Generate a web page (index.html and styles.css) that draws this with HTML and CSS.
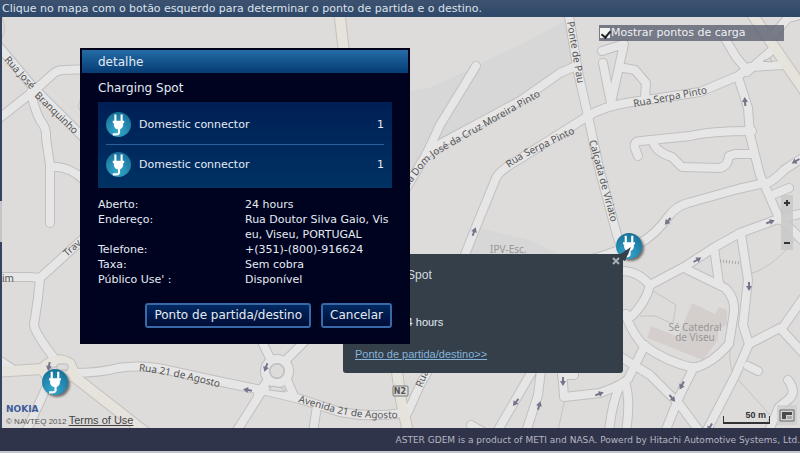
FILE: index.html
```html
<!DOCTYPE html>
<html lang="pt">
<head>
<meta charset="utf-8">
<title>Charging Spot</title>
<link rel="stylesheet" href="styles.css">
</head>
<body>
<header class="hint">Clique no mapa com o botão esquerdo para determinar o ponto de partida e o destino.</header>
<main class="stage">
  <div class="rail"><span class="rail-handle"></span></div>
  <section class="map">
    <svg class="map-canvas" viewBox="2 17 798 411" preserveAspectRatio="xMinYMin slice" aria-hidden="true">
      <defs>
        <g id="roads">
          <path d="M-4 43L33 87L86 140"/>
          <path d="M-4 121L35 90L53 74Q57 70 64 70L90 69"/>
          <path d="M31 92Q34 108 40 120Q47 128 46 138L50 165L50 223"/>
          <path d="M50 167Q68 165 84 180"/>
          <path d="M84 238L40 278L30 277L-4 277"/>
          <path d="M40 278L38 298L34 325Q35 333 54 358"/>
          <path d="M72 373Q100 373 118 368Q145 364 172 371Q230 384 262 390L300 399L340 412Q370 418 402 413"/>
          <path d="M48 384L26 432"/>
          <path d="M-4 358L14 370"/>
          <path d="M262 391L236 432"/>
          <path d="M260 338L270 358M306 340L286 360M268 380L258 394M287 380L294 396"/>
          <circle cx="277" cy="371" r="12"/>
          <path d="M317 406L313 432"/>
          <path d="M433 362L420 385L408 412"/>
          <path d="M476 66L440 125L427 153L404 192"/>
          <path d="M426 154L440 144L520 101L560 73L576 66"/>
          <path d="M462 262L478 222L496 178Q500 170 518 160L588 116Q604 106 632 102L700 92L738 76L750 67L784 65"/>
          <path d="M568 10L578 72L588 116L600 172L617 235L622 250"/>
          <path d="M602 51L624 44L611 103M603 63L611 103M624 68L635 70L646 83L645 97"/>
          <path d="M720 30L736 57L747 70M747 72L772 50M772 36L788 18L804 14"/>
          <path d="M738 77L748 108L750 135L760 175L780 220"/>
          <path d="M638 156L635 148Q633 141 641 141L690 136Q710 131 752 131"/>
          <path d="M653 142Q656 152 672 157L682 167L720 168Q728 166 729 156L735 154L754 154"/>
          <path d="M765 183L738 189L688 203Q676 206 668 217Q655 235 640 243L590 260"/>
          <path d="M765 184Q774 181 784 170L804 157M772 195L789 188"/>
          <path d="M804 213L778 219L740 233L715 247L684 267L650 285M780 218L804 242"/>
          <path d="M620 271Q637 270 650 285Q646 302 632 316L622 316"/>
          <path d="M714 248L719 283"/>
          <path d="M684 268L725 288Q735 297 734 312L729 344Q712 364 694 368Q666 362 642 344Q628 326 626 314"/>
          <path d="M741 234L748 280L743 325L749 344L735 376L707 430"/>
          <path d="M749 344L780 328L804 354M783 327L804 297M748 366L758 371"/>
          <path d="M645 345L628 379Q622 385 600 393L564 397L562 370"/>
          <path d="M616 354L650 375L680 405L700 432"/>
          <path d="M694 367L680 395L665 432"/>
          <path d="M620 386Q612 402 609 432M625 382Q631 400 626 432"/>
          <path d="M534 368L498 430M541 370L538 395L526 432M574 366L574 375L562 375"/>
          <path d="M788 380Q797 392 789 399L779 407L770 428M471 425L487 434"/>
        </g>
        <g id="avenues">
          <path d="M339 10L344 52M396 365L401 400L408 432"/>
          <path d="M-4 372L42 369Q56 355 70 364L76 378L145 432M42 369L48 377L74 376"/>
          <path d="M748 8L775 48L808 96"/>
        </g>
        <radialGradient id="pinFill" cx=".45" cy=".8" r=".8">
          <stop offset="0" stop-color="#36a7cc"/><stop offset="1" stop-color="#177098"/>
        </radialGradient>
        <symbol id="plug" viewBox="0 0 24 24">
          <circle cx="12" cy="12" r="12" fill="url(#pinFill)"/>
          <path d="M9 2.500V9M15 2.500V9" stroke="#fff" stroke-width="2" fill="none"/>
          <path d="M6.500 8.500H17.500V10.500H16.500V13Q16 16 13.500 16.500H10.500Q8 16 7.500 13V10.500H6.500Z" fill="#fff"/>
          <path d="M12.500 16V20Q12 21.500 10 21.500H6.500" stroke="#fff" stroke-width="2" fill="none"/>
        </symbol>
        <path id="arrow" d="M-4 -1H0V-3L5 0L0 3V1H-4Z"/>
        <path id="l-branq1" d="M4 60L40 100"/>
        <path id="l-branq2" d="M34 96L84 144"/>
        <path id="l-agosto" d="M139 371Q172 374 236 392"/>
        <path id="l-avenida" d="M298 402L336 413Q370 421 410 417"/>
        <path id="l-dom" d="M404 193L424 166Q430 159 438 154L560 85"/>
        <path id="l-serpa1" d="M509 168Q518 161 530 155L600 121"/>
        <path id="l-serpa2" d="M634 107L725 90"/>
        <path id="l-ponte" d="M567 22L582 110"/>
        <path id="l-calcada" d="M589 141L617 244"/>
      </defs>
      <rect width="810" height="440" class="land"/>
      <path d="M410 91L432 87L530 40L568 19L577 65L530 94L431 147L410 182Z" class="district"/>
      <path d="M480 228L530 240L560 255H462Z" class="district"/>
      <path d="M692 303L715 314L719 307L727 310L727 325L718 329L718 340L703 360L647 338L651 326L686 340L680 332Z" class="building"/>
      <path d="M650 289L676 305L673 324L655 316H640M749 274Q775 268 804 228M732 340Q727 356 733 374L770 415M565 399L558 430M80 100Q77 106 80 111M2 17Q7 30 2 38" class="footpath"/>
      <use href="#roads" class="casing"/>
      <use href="#avenues" class="avenue-casing"/>
      <use href="#roads" class="surface"/>
      <use href="#avenues" class="avenue-surface"/>
      <circle cx="277" cy="371" r="7" class="island"/>
      <path d="M269 390L272 386L282 388L285 392ZM763 61L770 58L772 62Z" class="island"/>
      <rect x="57" y="364" width="11" height="6" rx="2" class="island"/>
      <path d="M720 261L741 263" class="steps"/>
      <g class="arrows">
        <use href="#arrow" transform="translate(248 390) rotate(190)"/>
        <use href="#arrow" transform="translate(49 366) rotate(100)"/>
        <use href="#arrow" transform="translate(266 367) rotate(110)"/>
        <use href="#arrow" transform="translate(474 232) rotate(-70)"/>
        <use href="#arrow" transform="translate(516 402) rotate(128)"/>
        <use href="#arrow" transform="translate(539 406) rotate(-75)"/>
        <use href="#arrow" transform="translate(563 381) rotate(90)"/>
        <use href="#arrow" transform="translate(599 394) rotate(-20)"/>
        <use href="#arrow" transform="translate(672 398) rotate(50)"/>
        <use href="#arrow" transform="translate(682 385) rotate(118)"/>
        <use href="#arrow" transform="translate(697 260) rotate(-30)"/>
        <use href="#arrow" transform="translate(749 286) rotate(90)"/>
        <use href="#arrow" transform="translate(770 222) rotate(-20)"/>
        <use href="#arrow" transform="translate(668 221) rotate(130)"/>
        <use href="#arrow" transform="translate(745 102) rotate(-95)"/>
        <use href="#arrow" transform="translate(796 161) rotate(150)"/>
        <use href="#arrow" transform="translate(710 427) rotate(120)"/>
      </g>
      <g class="street">
        <text><textPath href="#l-branq1">Rua José</textPath></text>
        <text><textPath href="#l-branq2">Branquinho</textPath></text>
        <text><textPath href="#l-agosto">Rua 21 de Agosto</textPath></text>
        <text><textPath href="#l-avenida">Avenida 21 de Agosto</textPath></text>
        <text><textPath href="#l-dom">Rua Dom José da Cruz Moreira Pinto</textPath></text>
        <text><textPath href="#l-serpa1">Rua Serpa Pinto</textPath></text>
        <text><textPath href="#l-serpa2">Rua Serpa Pinto</textPath></text>
        <text><textPath href="#l-ponte">Ponte de Pau</textPath></text>
        <text><textPath href="#l-calcada">Calçada de Viriato</textPath></text>
        <text transform="translate(67 257) rotate(-42)">Trav</text>
        <text x="2" y="282">im</text>
        <text transform="translate(422 388) rotate(-68)">Rua</text>
      </g>
      <g class="place">
        <text x="490" y="253">IPV-Esc.</text>
        <text x="695" y="331" text-anchor="middle">Sé Catedral</text>
        <text x="695" y="341" text-anchor="middle">de Viseu</text>
      </g>
      <rect x="393" y="386" width="15" height="10" rx="1" class="shield"/>
      <text x="400" y="394" text-anchor="middle" class="shield-text">N2</text>
      <g class="pin">
        <use href="#plug" x="42" y="369" width="26" height="26"/>
        <use href="#plug" x="616" y="233" width="26" height="26"/>
      </g>
    </svg>

    <label class="toggle" for="spots"><input id="spots" type="checkbox" checked>Mostrar pontos de carga</label>

    <div class="zoom">
      <button type="button" aria-label="Zoom in"><svg viewBox="0 0 8 8"><path d="M4 1V7M1 4H7"/></svg></button>
      <button type="button" aria-label="Zoom out"><svg viewBox="0 0 8 8"><path d="M1 4H7"/></svg></button>
    </div>

    <div class="credits">
      <strong class="brand">NOKIA</strong>
      <div class="legal">© NAVTEQ 2012 <a href="#terms">Terms of Use</a></div>
    </div>

    <div class="map-tools">
      <div class="scale">50 m</div>
      <button class="overview" type="button" aria-label="Overview"><svg viewBox="0 0 16 13"><path d="M1 1H15V12H1Z" fill="#d5d5d4" stroke="#666" stroke-width="1"/><path d="M3 3H13V6H7V10H3Z" fill="#4b4b4b"/><path d="M8 7H13V10H8Z" fill="#aaa"/></svg></button>
    </div>

    <aside class="bubble">
      <svg class="bubble-tip" viewBox="0 0 16 14" aria-hidden="true"><path d="M0 10L15 0L9 14Z"/></svg>
      <button class="bubble-close" type="button" aria-label="Close"><svg viewBox="0 0 8 8"><path d="M1 1L7 7M7 1L1 7"/></svg></button>
      <h2>Charging Spot</h2>
      <p class="bubble-hours"><span>Aberto:</span><span>24 hours</span></p>
      <a href="#route">Ponto de partida/destino&gt;&gt;</a>
    </aside>

    <section class="dialog" role="dialog" aria-labelledby="dialog-title">
      <h1 id="dialog-title">detalhe</h1>
      <div class="dialog-body">
        <h2>Charging Spot</h2>
        <ul class="connectors">
          <li><svg><use href="#plug"/></svg><span>Domestic connector</span><b>1</b></li>
          <li><svg><use href="#plug"/></svg><span>Domestic connector</span><b>1</b></li>
        </ul>
        <dl class="facts">
          <dt>Aberto:</dt><dd>24 hours</dd>
          <dt>Endereço:</dt><dd>Rua Doutor Silva Gaio, Vis<br>eu, Viseu, PORTUGAL</dd>
          <dt>Telefone:</dt><dd>+(351)-(800)-916624</dd>
          <dt>Taxa:</dt><dd>Sem cobra</dd>
          <dt>Público Use' :</dt><dd>Disponível</dd>
        </dl>
        <div class="actions">
          <button type="button">Ponto de partida/destino</button>
          <button type="button">Cancelar</button>
        </div>
      </div>
    </section>
  </section>
</main>
<footer class="notice">ASTER GDEM is a product of METI and NASA. Powerd by Hitachi Automotive Systems, Ltd.</footer>
</body>
</html>
```
FILE: styles.css
```css
* { box-sizing: border-box; }
body {
  margin: 0;
  height: 100vh;
  display: flex;
  flex-direction: column;
  overflow: hidden;
  font: 11px/15px "DejaVu Sans", Verdana, sans-serif;
  color: #e4ebf4;
  background: #30344a;
}
h1, h2, p, ul, dl, dd { margin: 0; padding: 0; font-weight: normal; }
button { padding: 0; border: 0; background: none; font: inherit; color: inherit; }

.hint {
  padding: 1px 2px;
  background: linear-gradient(#3c526f, #2f486a);
  color: #dde2ea;
}
.stage { flex: 1; min-height: 0; display: flex; }
.rail { width: 2px; padding-top: 184px; background: #34435f; }
.rail-handle { display: block; height: 41px; background: #c4c5c9; }
.map { flex: 1; position: relative; overflow: hidden; background: #dddcdb; }
.map-canvas { display: block; width: 100%; height: 100%; }
.notice {
  padding: 5px 0 4px;
  border-bottom: 2px solid #c5c7ce;
  background: #30344a;
  color: #b4b7c2;
  font-size: 9px;
  line-height: 14px;
  text-align: right;
  white-space: nowrap;
}

.land { fill: #dddcdb; }
.district { fill: #d7d7d7; }
.building { fill: #d4cfcd; }
.footpath { fill: none; stroke: #c6c4c1; }
.casing, .surface, .avenue-casing, .avenue-surface { fill: none; stroke-linecap: round; stroke-linejoin: round; }
.casing { stroke: #c1bfc0; stroke-width: 10px; }
.surface { stroke: #e7e6e6; stroke-width: 8px; }
.avenue-casing { stroke: #c4c1bd; stroke-width: 12px; }
.avenue-surface { stroke: #e6e3dd; stroke-width: 10px; }
.island { fill: #dddcdb; stroke: #bcbabb; }
.steps { stroke: #aaa8a6; stroke-width: 3px; stroke-dasharray: 1 2; }
.arrows { fill: #77738a; }
.street { font: 10px "Noto Sans", sans-serif; fill: #555; }
.place { font: 10px "Noto Sans", sans-serif; fill: #989696; }
.shield { fill: #dedddc; stroke: #777; }
.shield-text { font-size: 8px; font-weight: bold; fill: #555; }
.pin { filter: drop-shadow(2px 2px 1px rgba(0, 0, 0, .5)); }

.toggle {
  position: absolute;
  top: 8px;
  right: 16px;
  width: 185px;
  display: flex;
  align-items: center;
  background: rgba(88, 93, 110, .78);
  color: #eef0f4;
  line-height: 16px;
}
.toggle input {
  appearance: none;
  width: 10px;
  height: 10px;
  margin: 0 1px;
  background: #f2f2f2;
  position: relative;
}
.toggle input:checked::after {
  content: "";
  position: absolute;
  left: 3px;
  top: 1px;
  width: 4px;
  height: 7px;
  border: solid #222;
  border-width: 0 2px 2px 0;
  transform: rotate(40deg);
}

.zoom {
  position: absolute;
  top: 178px;
  right: 7px;
  width: 12px;
  height: 55px;
  padding: 3px 2px;
  display: flex;
  flex-direction: column;
  justify-content: space-between;
  background: rgba(200, 200, 200, .85);
}
.zoom button { height: 9px; }
.zoom svg, .bubble-close svg { display: block; width: 8px; height: 8px; fill: none; stroke: #333; stroke-width: 2px; }

.credits { position: absolute; left: 4px; bottom: 0; color: #555; font-family: "Liberation Sans", Arial, sans-serif; }
.brand { display: block; color: #3d5c9b; font: bold 9px/9px "DejaVu Sans", sans-serif; }
.legal { font-size: 8px; line-height: 12px; }
.legal a { font-size: 11px; color: #444; }

.map-tools { position: absolute; right: 3px; bottom: 3px; display: flex; align-items: flex-end; gap: 7px; }
.scale {
  width: 47px;
  height: 13px;
  padding-right: 4px;
  margin-bottom: 1px;
  text-align: right;
  color: #333;
  font: bold 9px/9px "Liberation Sans", Arial, sans-serif;
  border-bottom: 2px solid #333;
  background: linear-gradient(#333, #333) left bottom / 1px 6px no-repeat, linear-gradient(#333, #333) right bottom / 1px 6px no-repeat;
}
.overview { width: 20px; height: 20px; display: grid; place-items: center; background: rgba(205, 205, 205, .8); }
.overview svg { width: 16px; height: 13px; }

.bubble {
  position: absolute;
  left: 341px;
  top: 237px;
  width: 280px;
  padding: 13px 12px 12px;
  border-radius: 3px;
  background: #343f49;
  font: 11px/14px "Liberation Sans", Arial, sans-serif;
}
.bubble h2 { font-size: 12px; line-height: 16px; color: #d5dae0; }
.bubble-hours { display: flex; gap: 10px; padding: 32px 0 18px; }
.bubble a { display: block; color: #85b4dd; }
.bubble-tip { position: absolute; right: -9px; top: -7px; width: 16px; height: 14px; fill: #343f49; }
.bubble-close { position: absolute; right: 3px; top: 3px; }
.bubble-close svg { stroke: #a9afb5; }

.dialog {
  position: absolute;
  left: 78px;
  top: 31px;
  width: 330px;
  border: 2px solid #00031a;
  background: #00031f;
}
.dialog h1 {
  padding: 4px 16px 3px;
  background: linear-gradient(#246ba6, #063c73);
  font-size: 12px;
  line-height: 16px;
}
.dialog-body { padding: 7px 16px 14px; }
.dialog h2 { font-size: 12px; line-height: 16px; }
.connectors {
  list-style: none;
  margin: 6px 0 9px;
  padding: 3px 8px 5px;
  background: linear-gradient(#001f54, #003264);
}
.connectors li { display: flex; align-items: center; gap: 8px; height: 39px; }
.connectors li + li { border-top: 1px solid #285f9f; }
.connectors svg { width: 25px; height: 25px; }
.connectors span { flex: 1; }
.connectors b { font-weight: normal; }
.facts { display: grid; grid-template-columns: 1fr 1fr; }
.actions { display: flex; justify-content: flex-end; gap: 10px; margin-top: 16px; }
.actions button {
  padding: 3px 7px;
  border: 2px solid #376aa6;
  border-radius: 3px;
  background: linear-gradient(#022962, #010d36);
  font-size: 12px;
  line-height: 15px;
}
```
